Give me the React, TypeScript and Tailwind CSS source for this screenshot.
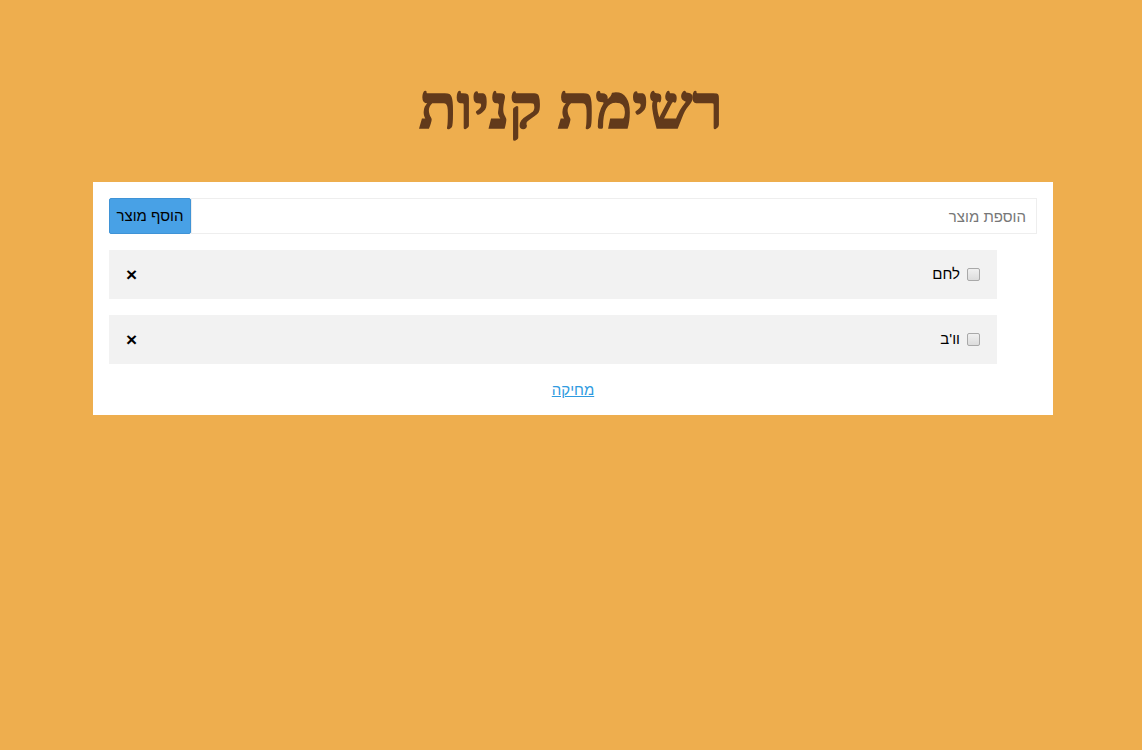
import React from "react";

export default function App() {
  const items = ["לחם", "וו'ב"];
  return (
    <div dir="rtl" className="min-h-[750px] w-full bg-[#eeae4e] pt-[70px]" style={{ fontFamily: '"Liberation Sans", Arial, sans-serif' }}>
      <h1
        className="text-center text-[62px] font-bold leading-[74px] text-[#623a1b] [-webkit-text-stroke:1.6px_#623a1b]"
        style={{ fontFamily: '"Liberation Serif", "DejaVu Serif", serif' }}
      >
        רשימת קניות
      </h1>
      <div className="pl-[4px]">
        <div className="mx-auto mt-[38px] w-[960px] bg-white p-[16px] pb-[13px]">
          <div className="flex h-[36px]">
            <input
              className="h-full flex-1 border border-[#eeeeee] px-[10px] text-[15px] text-[#555] outline-none placeholder:text-[#777]"
              placeholder="הוספת מוצר"
            />
            <button className="h-full w-[82px] rounded-[2px] border border-[#3f93d6] bg-[#48a1e6] text-[15px] text-black">הוסף מוצר</button>
          </div>
          <ul className="mt-[16px] flex flex-col gap-[16px] pr-[40px]">
            {items.map((t) => (
              <li key={t} className="flex h-[49px] items-center justify-between bg-[#f2f2f2] pl-[17px] pr-[17px]">
                <label className="flex items-center gap-[7px] text-[15px] text-black">
                  <span className="inline-block h-[13px] w-[13px] rounded-[2px] border border-[#a9a9a9] bg-gradient-to-b from-[#f0f0f0] to-[#dcdcdc]" />
                  <span>{t}</span>
                </label>
                <span className="text-[19px] font-bold leading-none text-black">×</span>
              </li>
            ))}
          </ul>
          <div className="mt-[14px] text-center">
            <a href="#" className="text-[15px] text-[#2f9be0] underline">מחיקה</a>
          </div>
        </div>
      </div>
    </div>
  );
}
